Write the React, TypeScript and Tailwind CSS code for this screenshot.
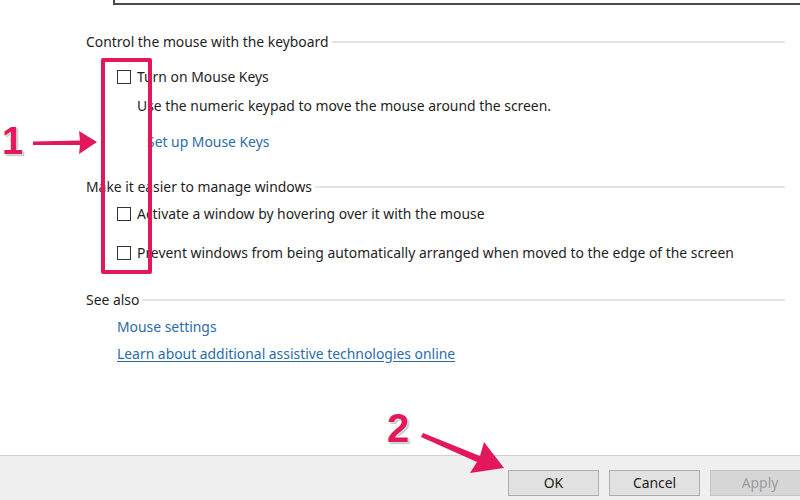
import React from 'react';

const font = { fontFamily: '"Noto Sans", "Open Sans", Arial, sans-serif' };
const digitFont = { fontFamily: '"Liberation Sans", Arial, sans-serif' };

const Heading = ({ label }: { label: string }) => (
  <div className="flex items-center h-[20px] pl-[86px] pr-[15px]">
    <span className="text-[#1e1e1e] whitespace-nowrap">{label}</span>
    <div className="flex-1 h-[2px] bg-[#e3e3e3] ml-[3px]" />
  </div>
);

const CheckRow = ({ label }: { label: string }) => (
  <div className="flex items-center h-[20px] pl-[117px]">
    <div className="w-[14px] h-[14px] border border-[#333] bg-white shrink-0" />
    <span className="ml-[6px] text-[#1e1e1e] whitespace-nowrap">{label}</span>
  </div>
);

const Button = ({ label, disabled }: { label: string; disabled?: boolean }) => (
  <div
    className={`h-[26px] flex items-center justify-center border shrink-0 ${
      disabled
        ? 'w-[100px] bg-[#d6d6d6] border-[#c4c4c4] text-[#9c9c9c]'
        : 'w-[91px] bg-[#e1e1e1] border-[#adadad] text-[#1e1e1e]'
    }`}
  >
    {label}
  </div>
);

export default function App() {
  return (
    <div className="relative w-[800px] h-[500px] bg-white overflow-hidden flex flex-col text-[13.9px]" style={font}>
      {/* bottom of the field above */}
      <div className="h-[5px] ml-[113px] -mr-[20px] border-l-2 border-b-2 border-[#4a4a4a]" />

      <div className="mt-[27px]">
        <Heading label="Control the mouse with the keyboard" />
      </div>
      <div className="mt-[15px]">
        <CheckRow label="Turn on Mouse Keys" />
      </div>
      <div className="mt-[9px] h-[20px] flex items-center pl-[137px] text-[#1e1e1e]">
        Use the numeric keypad to move the mouse around the screen.
      </div>
      <div className="mt-[16px] h-[20px] flex items-center pl-[147px] text-[#2b6ca8]">
        Set up Mouse Keys
      </div>

      <div className="mt-[25px]">
        <Heading label="Make it easier to manage windows" />
      </div>
      <div className="mt-[7px]">
        <CheckRow label="Activate a window by hovering over it with the mouse" />
      </div>
      <div className="mt-[19px]">
        <CheckRow label="Prevent windows from being automatically arranged when moved to the edge of the screen" />
      </div>

      <div className="mt-[27px]">
        <Heading label="See also" />
      </div>
      <div className="mt-[7px] h-[20px] flex items-center pl-[117px] text-[#2b6ca8]">Mouse settings</div>
      <div className="mt-[7px] h-[20px] flex items-center pl-[117px] text-[#2b6ca8]">
        <span className="underline underline-offset-2">Learn about additional assistive technologies online</span>
      </div>

      <div className="flex-1" />

      {/* button bar */}
      <div className="h-[45px] border-t border-[#d0d0d0] bg-[#efefef] flex items-start justify-end gap-[10px] pt-[14px] -mr-[10px]">
        <Button label="OK" />
        <Button label="Cancel" />
        <Button label="Apply" disabled />
      </div>

      {/* annotations */}
      <div className="absolute left-[101px] top-[58px] w-[51px] h-[216px] border-[4px] border-[#e3175c] rounded-[2px]" />

      <div
        className="absolute left-[2px] top-[122px] text-[38px] font-bold leading-none text-[#e3175c] [text-shadow:-1px_-1px_0_#fff,1px_1px_0_#cfdcd8,2px_2px_1px_#b9c7c4]"
        style={digitFont}
      >
        1
      </div>
      <svg className="absolute left-[30px] top-[128px]" width="72" height="30" viewBox="0 0 72 30">
        <path d="M3 13.5 L50 12.5 L49 3 L67 14 L49 26 L50 17 L3 17 Z" fill="#e3175c" />
      </svg>

      <div
        className="absolute left-[387px] top-[408px] text-[40px] font-bold leading-none text-[#e3175c] [text-shadow:-1px_-1px_0_#fff,1px_1px_0_#cfdcd8,2px_2px_1px_#b9c7c4]"
        style={digitFont}
      >
        2
      </div>
      <svg className="absolute left-[418px] top-[428px]" width="92" height="50" viewBox="0 0 92 50">
        <path d="M5 5 L62 28 L66 14 L86 40 L52 45 L59 34 L3 9 Z" fill="#e3175c" />
      </svg>
    </div>
  );
}
